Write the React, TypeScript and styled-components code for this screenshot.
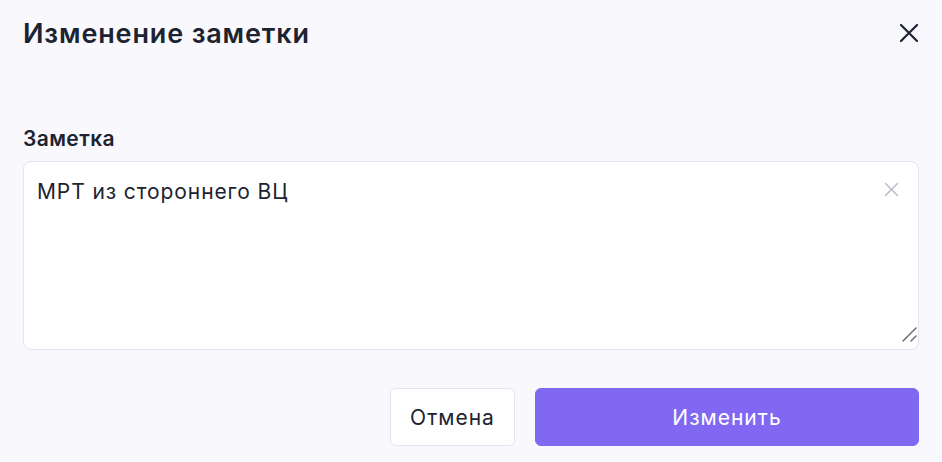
import { useState } from 'react';
import styled, { createGlobalStyle } from 'styled-components';

const GlobalStyle = createGlobalStyle`
  html, body {
    margin: 0;
    padding: 0;
    background: #f9f9fd;
  }
  body {
    font-family: Inter, "Noto Sans", sans-serif;
    color: #1d2330;
  }
`;

export default function App() {
  const [note, setNote] = useState('МРТ из стороннего ВЦ');

  return (
    <>
      <GlobalStyle />
      <Dialog>
        <Header>
          <Title>Изменение заметки</Title>
          <CloseButton aria-label="Закрыть">
            <svg width="20" height="20" viewBox="0 0 20 20" fill="none">
              <path d="M2 2L18 18M18 2L2 18" stroke="#1d2330" strokeWidth="2.2" strokeLinecap="round" />
            </svg>
          </CloseButton>
        </Header>

        <Field>
          <Label>Заметка</Label>
          <InputBox>
            <TextArea value={note} onChange={(e) => setNote(e.target.value)} />
            <ClearButton aria-label="Очистить" onClick={() => setNote('')}>
              <svg width="15" height="15" viewBox="0 0 15 15" fill="none">
                <path d="M1.5 1.5L13.5 13.5M13.5 1.5L1.5 13.5" stroke="#bcbacd" strokeWidth="1.5" strokeLinecap="round" />
              </svg>
            </ClearButton>
            <Grip width="16" height="16" viewBox="0 0 16 16" fill="none">
              <path d="M2 15L15 2M10 15L15 10" stroke="#6e6e72" strokeWidth="1.5" strokeLinecap="round" />
            </Grip>
          </InputBox>
        </Field>

        <Footer>
          <Button>Отмена</Button>
          <Button primary wide>
            Изменить
          </Button>
        </Footer>
      </Dialog>
    </>
  );
}

const Dialog = styled.div`
  display: flex;
  flex-direction: column;
  padding: 14px 23px 0 23px;
`;

const Header = styled.div`
  display: flex;
  align-items: center;
  justify-content: space-between;
  height: 38px;
`;

const Title = styled.h1`
  margin: 0;
  font-size: 27px;
  font-weight: 600;
  letter-spacing: 0.85px;
  color: #1d2330;
`;

const CloseButton = styled.button`
  display: flex;
  align-items: center;
  justify-content: center;
  padding: 0;
  border: none;
  background: none;
  cursor: pointer;
`;

const Field = styled.div`
  display: flex;
  flex-direction: column;
  gap: 10px;
  margin-top: 75px;
`;

const Label = styled.label`
  font-size: 21px;
  font-weight: 600;
  line-height: 24px;
  letter-spacing: 0.4px;
`;

const InputBox = styled.div`
  position: relative;
  display: flex;
`;

const TextArea = styled.textarea`
  box-sizing: border-box;
  width: 100%;
  height: 189px;
  padding: 17px 50px 14px 13px;
  border: 1px solid #e4e3ee;
  border-radius: 8px;
  background: #ffffff;
  font-family: Inter, "Noto Sans", sans-serif;
  font-size: 21px;
  line-height: 26px;
  letter-spacing: 0.9px;
  color: #1d2330;
  resize: none;
  outline: none;
`;

const ClearButton = styled.button`
  position: absolute;
  top: 21px;
  right: 20px;
  display: flex;
  padding: 0;
  border: none;
  background: none;
  cursor: pointer;
`;

const Grip = styled.svg`
  position: absolute;
  right: 2px;
  bottom: 8px;
  pointer-events: none;
`;

const Footer = styled.div`
  display: flex;
  justify-content: flex-end;
  gap: 20px;
  margin-top: 38px;
`;

const Button = styled.button<{ primary?: boolean; wide?: boolean }>`
  box-sizing: border-box;
  height: 58px;
  width: ${(p) => (p.wide ? '384px' : '125px')};
  border-radius: 6px;
  border: 1px solid ${(p) => (p.primary ? '#8168f2' : '#e6e5ee')};
  background: ${(p) => (p.primary ? '#8168f2' : '#ffffff')};
  color: ${(p) => (p.primary ? '#ffffff' : '#1d2330')};
  font-family: Inter, "Noto Sans", sans-serif;
  font-size: 21px;
  font-weight: 400;
  letter-spacing: 1px;
  cursor: pointer;
`;
